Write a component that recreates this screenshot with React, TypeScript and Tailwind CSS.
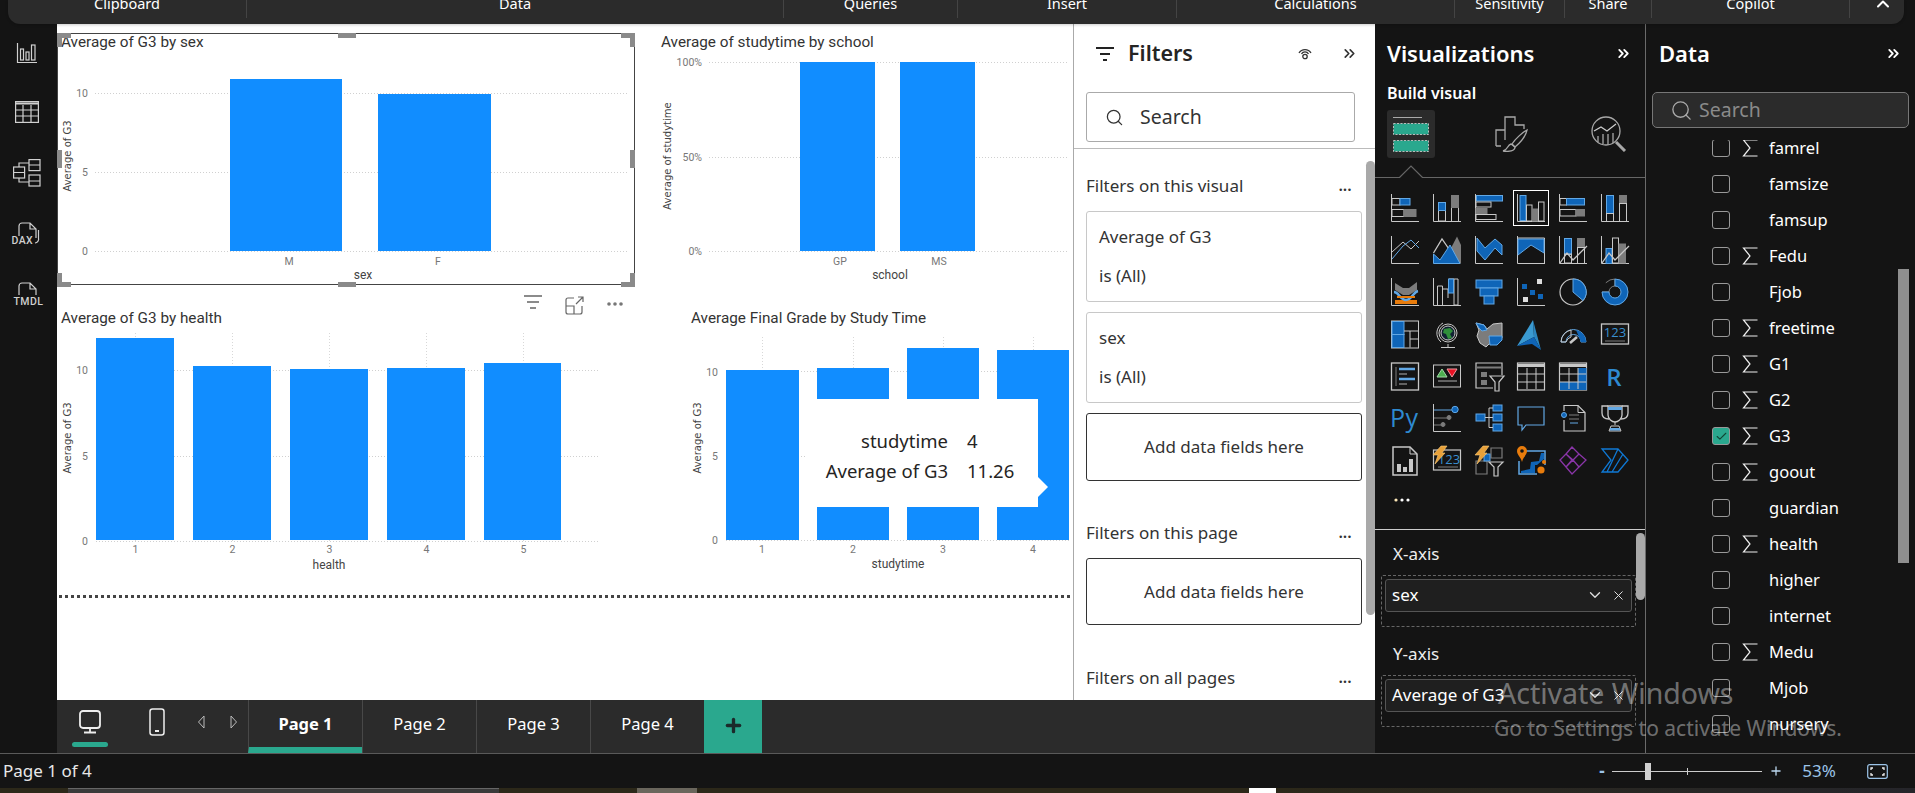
import React from "react";
import { ChevronsRight, Search, ChevronDown, X, ChevronUp, Plus, Check } from "lucide-react";

const G = "#c8c8c8", D = "#7c7c7c", B = "#0f65b8", L = "#62a8e5", O = "#e87c0c";
const BLUE = "#118dff";
const AX = <path d="M.5 0V27.5H28" stroke={G} />;

const vizIcons: React.ReactNode[] = [
  <>{AX}<rect x="1" y="4.5" width="8" height="6.5" stroke={G} /><rect x="9" y="4.5" width="10" height="6.5" fill={B} stroke={L} /><rect x="1" y="15.5" width="12" height="7" stroke={G} /><rect x="13" y="15.5" width="12" height="7" fill={D} stroke={D} /></>,
  <>{AX}<rect x="5.5" y="16" width="7" height="11" stroke={G} /><rect x="5.5" y="8.5" width="7" height="8" fill={B} stroke={L} /><rect x="18.5" y="13.5" width="7" height="14" stroke={G} /><rect x="18.5" y="1.5" width="7" height="12" fill={D} stroke={D} /></>,
  <>{AX}<rect x="1.5" y="1.5" width="26" height="5.5" fill={B} stroke={L} /><rect x="1" y="8" width="15" height="5" stroke={G} /><rect x="1" y="14.5" width="11" height="5" fill={D} stroke={D} /><rect x="1" y="20.5" width="20" height="5" stroke={G} /></>,
  <>{AX}<rect x="3" y="1.5" width="6" height="25" fill={B} stroke={L} /><rect x="9.5" y="11" width="5.5" height="16" stroke={G} /><rect x="15.5" y="15" width="5" height="12" fill={D} stroke={D} /><rect x="21.5" y="8" width="5.5" height="19" stroke={G} /></>,
  <>{AX}<rect x="1" y="4.5" width="6.5" height="6.5" stroke={G} /><rect x="7.5" y="4.5" width="18" height="6.5" fill={B} stroke={L} /><rect x="1" y="15.5" width="16" height="6.5" stroke={G} /><rect x="17" y="15.5" width="8.5" height="6.5" fill={D} stroke={D} /></>,
  <>{AX}<rect x="5.5" y="1.5" width="7" height="18" fill={B} stroke={L} /><rect x="5.5" y="19.5" width="7" height="8" stroke={G} /><rect x="18.5" y="1.5" width="7" height="8" fill={D} stroke={D} /><rect x="18.5" y="9.5" width="7" height="18" stroke={G} /></>,

  <>{AX}<path d="M1 16L12 6L20 13L28 5" stroke={G} /><path d="M1 23L12 10L20 4L28 12" stroke={L} /></>,
  <><path d="M17 14L24 .5L28 9V27.5H19Z" fill={D} /><path d="M.5 17L9 3L18 16" stroke={G} strokeWidth="1.3" /><path d="M.5 18L7 24L17 9L27 27.5H.5Z" fill={B} stroke={L} /></>,
  <>{AX}<path d="M2 2L10 12L20 3L27 9V19L20 12L10 24L2 15Z" fill={B} stroke={L} /></>,
  <>{AX}<path d="M.5 2H27.5V27.5" stroke={G} /><path d="M1 3H27V17L14 9L1 19Z" fill={B} stroke={L} /></>,
  <>{AX}<rect x="5.5" y="2.5" width="7" height="16" fill={B} stroke={L} /><rect x="5.5" y="18" width="7" height="9" stroke={G} /><rect x="18.5" y="2.5" width="7" height="9" fill={D} stroke={D} /><rect x="18.5" y="11.5" width="7" height="16" stroke={G} /><path d="M1 27L8 17L14 24L28 10" stroke={G} strokeWidth="1.3" /></>,
  <>{AX}<rect x="5" y="12.5" width="6" height="15" fill={B} stroke={L} /><rect x="11.5" y="2" width="6" height="25" stroke={G} /><rect x="18" y="8" width="6.5" height="19" fill={D} stroke={D} /><path d="M1 27L8 17L14 24L28 10" stroke={G} strokeWidth="1.3" /></>,

  <>{AX}<path d="M4 5L12 10H18L26 4V12L18 17H12L4 12Z" fill={D} /><path d="M4 22H26V26H4Z" fill={O} /><path d="M3 14C8 14 9 22 15 22S22 14 27 13" stroke={L} strokeWidth="2.5" /><path d="M6 19H24" stroke={O} strokeWidth="2" /></>,
  <>{AX}<path d="M4.5 27V8H9.5V27M9.5 11H15V20M16 1H21V27H25V1H21" stroke={G} /><rect x="15.5" y="1" width="5" height="14" fill={B} stroke={L} /></>,
  <><rect x="1" y="2" width="26" height="8" fill={B} stroke={L} /><rect x="5" y="10" width="18" height="8" fill={B} stroke={L} /><rect x="9" y="18" width="10" height="8" fill={B} stroke={L} /></>,
  <>{AX}<rect x="5" y="6" width="5" height="5" fill={B} /><rect x="13" y="12" width="5" height="5" fill={B} /><rect x="21" y="16" width="5" height="5" fill={B} /><rect x="20" y="1" width="5" height="5" fill="#ddd" /><rect x="6" y="19" width="5" height="5" fill="#ddd" /></>,
  <><circle cx="14" cy="14" r="13" stroke={G} strokeWidth="1.2" /><path d="M14 14V1A13 13 0 0 1 24 22.5Z" fill={B} stroke={L} /></>,
  <><path d="M4.8 4.8A13 13 0 0 1 14 1V8A6 6 0 0 0 8 14H1" stroke={D} strokeWidth="1" /><path d="M14 1A13 13 0 1 1 1 14H8A6 6 0 1 0 14 8Z" fill={B} stroke={L} /></>,

  <><rect x=".5" y="1" width="27" height="27" stroke={G} /><rect x="1" y="1.5" width="12" height="13" fill={B} stroke={L} /><rect x="1" y="14.5" width="12" height="13" fill={B} stroke={L} /><path d="M13 11H27M19 11V27.5M19 19H27" stroke={G} /></>,
  <><circle cx="15" cy="13" r="9" stroke={G} /><circle cx="15" cy="13" r="7" fill="#123" stroke={G} /><path d="M11 9L17 8L20 11L17 14L19 18L15 19L13 14L10 13Z" fill="#2f8f3a" /><path d="M10 3A11.5 11.5 0 0 0 8 22M15 24V27M8 27.5H22" stroke={G} /></>,
  <><path d="M1 3L9 5L12 9L18 4L27 3V18L22 24H14L11 27L5 23L2 16L4 10Z" fill={D} stroke={G} /><path d="M1 3L9 5L12 10L7 11L4 8Z" fill={B} stroke={L} /><path d="M14 16H27V20L22 25H15Z" fill={B} stroke={L} /></>,
  <><path d="M0 26L16 0L17 17Z" fill="#3a9ad1" /><path d="M16 0L24 30L17 17Z" fill="#2b86c0" /><path d="M0 26L17 17L24 30L15 24Z" fill="#0f65b8" /></>,
  <><path d="M2 22A12.5 12.5 0 0 1 27 22H22A7.5 7.5 0 0 0 7 22Z" stroke={L} fill="none" /><path d="M2 22A12.5 12.5 0 0 1 12 10V17A7.5 7.5 0 0 0 7 22Z" stroke={G} /><path d="M11 23L18 17" stroke={G} strokeWidth="2.5" /><path d="M17 10A12 12 0 0 1 27 22H22Z" fill={B} /></>,
  <><rect x=".5" y="4" width="27" height="20" stroke={G} strokeWidth="1.3" /><text x="14" y="17" textAnchor="middle" fontSize="13" fill="#3a8fd0" fontFamily="Open Sans, sans-serif">123</text><path d="M4 21H24" stroke={D} /></>,

  <><rect x=".5" y="1" width="27" height="27" stroke={G} strokeWidth="1.3" /><path d="M5 5V24" stroke={D} /><path d="M8 7H24M8 17H24" stroke={L} strokeWidth="2.5" /><path d="M8 12H16M8 22H16" stroke={D} strokeWidth="1.5" /></>,
  <><rect x=".5" y="3" width="27" height="22" stroke={G} /><path d="M4 15L9 7L14 15Z" fill="#4caf50" stroke="#9fd8a4" /><path d="M14 7H24L19 15Z" fill="#e81123" stroke="#f29aa2" /><path d="M5 19H24" stroke={D} strokeWidth="1.5" /></>,
  <><path d="M18 26H1V1H27V13" stroke={G} strokeWidth="1.2" /><path d="M1 5.5H27" stroke={D} strokeWidth="2" /><rect x="6" y="10" width="6" height="5" fill={D} /><rect x="6" y="18" width="6" height="5" fill={D} /><path d="M15 14H29L24 20V29H20V20Z" fill="#141414" stroke={G} strokeWidth="1.2" /></>,
  <><rect x=".5" y="1" width="27" height="27" stroke={G} strokeWidth="1.2" /><path d="M1 3.5H27" stroke={G} strokeWidth="3" /><path d="M1 12H27M1 20H27M10 6V27M19 6V27" stroke={G} /></>,
  <><rect x=".5" y="1" width="27" height="27" stroke={G} strokeWidth="1.2" /><path d="M1 3.5H27" stroke={G} strokeWidth="3" /><rect x="19" y="6" width="8.5" height="7" fill={B} /><rect x="19" y="13" width="8.5" height="7" fill={B} /><rect x="1" y="20" width="26.5" height="8" fill={B} /><path d="M1 12H27M1 20H27M10 6V27M19 6V27" stroke={G} /></>,
  <text x="13" y="24" textAnchor="middle" fontSize="24" fontWeight="600" fill="#2e8ad0" fontFamily="Open Sans, sans-serif">R</text>,

  <text x="13" y="23" textAnchor="middle" fontSize="25" fill="#2e8ad0" fontFamily="Open Sans, sans-serif" textLength="28">Py</text>,
  <>{AX}<path d="M1 6H19" stroke={L} /><path d="M1 14H16M1 21H11" stroke={D} /><circle cx="22" cy="5.5" r="3.2" fill={B} stroke={L} /><circle cx="16" cy="13.5" r="2" fill={D} stroke={D} /><circle cx="10" cy="20.5" r="2" fill={D} stroke={D} /></>,
  <><rect x="1" y="10" width="9" height="7" fill={B} stroke={L} /><rect x="18" y="1" width="9" height="6" fill={B} stroke={L} /><rect x="18" y="10" width="9" height="7" fill={B} stroke={L} /><rect x="18" y="20" width="9" height="7" fill={B} stroke={L} /><path d="M10 13.5H18M14 4V23.5M14 4H18M14 23.5H18" stroke={G} /></>,
  <path d="M1 3H27V21H9L5 26V21H1Z" stroke={L} strokeWidth="1.2" />,
  <><path d="M5 7V1.5H19L26 8.5V27H5V16" stroke={G} strokeWidth="1.2" /><path d="M19 1.5V8.5H26" stroke={G} /><circle cx="5" cy="11" r="2.5" fill={B} stroke={L} /><path d="M10 11H20M10 15H20" stroke={D} /><path d="M11 19H19" stroke={L} /></>,
  <><path d="M7 2H1V9C1 13 4 15 8 15M21 2H27V9C27 13 24 15 20 15" stroke={G} strokeWidth="1.3" /><path d="M7 2H21V11C21 15 17 18 14 18S7 15 7 11Z" stroke={G} strokeWidth="1.3" /><rect x="7" y="3" width="14" height="3" fill={L} /><path d="M14 18V21M10 22H18L20 27H8Z" stroke={G} /><rect x="9" y="24" width="10" height="2.5" fill={L} /></>,

  <><path d="M2 1H19L26 8V29H2Z" stroke={G} strokeWidth="1.5" /><path d="M19 1V8H26" stroke={G} /><rect x="6" y="18" width="4" height="8" fill={G} /><rect x="12" y="21" width="4" height="5" fill={G} /><rect x="18" y="13" width="4" height="13" fill={G} /></>,
  <><rect x=".5" y="4" width="27" height="20" stroke={G} strokeWidth="1.2" /><text x="16" y="18" textAnchor="middle" fontSize="13" fill="#3a8fd0" fontFamily="Open Sans, sans-serif">123</text><path d="M5 21H25" stroke={D} /><path d="M8 0H14L9 7H12L2 18L5 9H0Z" fill="#e8a13a" stroke="#f8c979" strokeWidth=".6" /></>,
  <><path d="M1 15H12V28H1ZM16 2H27V12H16Z" stroke={D} strokeWidth="1.2" /><rect x="9" y="8" width="6" height="7" fill={B} stroke={L} /><path d="M8 0H14L9 7H12L2 18L5 9H0Z" fill="#e8a13a" stroke="#f8c979" strokeWidth=".6" /><path d="M14 16H28L23 21V30H19V21Z" fill="#141414" stroke={G} strokeWidth="1.2" /></>,
  <><path d="M7 5H28V19M20 28H2V15" stroke={L} strokeWidth="1.5" fill="none" /><path d="M4 25L13 23L14 16L22 15L24 7H27V13L20 19H18V27H4Z" fill={B} /><path d="M5 0A5 5 0 0 1 10 5C10 9 6 11 5 16C4 11 0 9 0 5A5 5 0 0 1 5 0Z" fill={O} /><circle cx="5" cy="5" r="1.8" fill="#141414" /><circle cx="24" cy="24" r="3.6" fill={O} /><circle cx="27" cy="16" r="2" fill={O} /></>,
  <><path d="M13 1L20 8L14 14L7 8Z M20 8L27 14L20 21L14 14Z M7 8L13 14L7 21L1 14Z M14 14L20 21L13 28L7 21Z" stroke="#8a35a8" strokeWidth="1.3" /></>,
  <><path d="M1 3H17L27 14L17 26H1L10 14Z M17 3L6 26 M22 8L11 26" stroke="#0f78d4" strokeWidth="1.3" fill="none" /></>,

  <g fill="#fff"><circle cx="5" cy="12" r="1.6" fill="#ffe9b8" /><circle cx="11" cy="12" r="1.6" /><circle cx="17" cy="12" r="1.6" /></g>,
];

function Plot({ x, y, w, h, children }: { x: number; y: number; w: number; h: number; children: React.ReactNode }) {
  return (
    <svg width={w} height={h} viewBox={`${x} ${y} ${w} ${h}`} className="block" fontFamily="Roboto, sans-serif">
      {children}
    </svg>
  );
}

const Title = ({ x, y, t }: { x: number; y: number; t: string }) => (
  <text x={x} y={y + 5} fontSize="15.3" fill="#333">{t}</text>
);
const YTitle = ({ x, y, t }: { x: number; y: number; t: string }) => (
  <text transform={`translate(${x + 5.5} ${y}) rotate(-90)`} textAnchor="middle" fontSize="10" fill="#444" fontFamily="DejaVu Sans, sans-serif">{t}</text>
);
const Tick = ({ x, y, t, a = "end" }: { x: number; y: number; t: string; a?: "end" | "middle" }) => (
  <text x={x} y={y + 3.5} textAnchor={a} fontSize="10.5" fill="#777">{t}</text>
);
const XTitle = ({ x, y, t }: { x: number; y: number; t: string }) => (
  <text x={x} y={y + 4} textAnchor="middle" fontSize="12" fill="#444">{t}</text>
);
const Grid = ({ x1, x2, y }: { x1: number; x2: number; y: number }) => (
  <line x1={x1} x2={x2} y1={y + 0.5} y2={y + 0.5} stroke="#d0d0d0" strokeDasharray="1 2" />
);
const VGrid = ({ x, y1, y2 }: { x: number; y1: number; y2: number }) => (
  <line x1={x + 0.5} x2={x + 0.5} y1={y1} y2={y2} stroke="#d8d8d8" strokeDasharray="1 2" />
);
const Bar = ({ x1, x2, top, bot }: { x1: number; x2: number; top: number; bot: number }) => (
  <rect x={x1} y={top} width={x2 - x1} height={bot - top} fill={BLUE} />
);

function Handle({ className }: { className: string }) {
  return <div className={`absolute bg-[#8a8a8a] ${className}`} />;
}

function Visual1() {
  return (
    <div className="relative h-[252px] w-[578px] border border-[#444]">
      <div className="-m-px">
        <Plot x={57} y={33} w={578} h={252}>
          <Title x={61} y={42} t="Average of G3 by sex" />
          <YTitle x={65} y={156} t="Average of G3" />
          <Grid x1={95} x2={629} y={93} />
          <Grid x1={95} x2={629} y={172} />
          <Grid x1={95} x2={629} y={251} />
          <Tick x={88} y={93} t="10" />
          <Tick x={88} y={172} t="5" />
          <Tick x={88} y={251} t="0" />
          <Bar x1={230} x2={342} top={79} bot={251} />
          <Bar x1={378} x2={491} top={94} bot={251} />
          <Tick x={289} y={261} t="M" a="middle" />
          <Tick x={438} y={261} t="F" a="middle" />
          <XTitle x={363} y={275} t="sex" />
        </Plot>
      </div>
      <Handle className="-left-px -top-px h-[5px] w-[14px]" />
      <Handle className="-left-px -top-px h-[14px] w-[5px]" />
      <Handle className="-right-px -top-px h-[5px] w-[14px]" />
      <Handle className="-right-px -top-px h-[14px] w-[5px]" />
      <Handle className="-bottom-[3px] -left-px h-[5px] w-[14px]" />
      <Handle className="-bottom-[3px] -left-px h-[14px] w-[5px]" />
      <Handle className="-bottom-[3px] -right-px h-[5px] w-[14px]" />
      <Handle className="-bottom-[3px] -right-px h-[14px] w-[5px]" />
      <Handle className="left-[280px] -top-px h-[5px] w-[18px]" />
      <Handle className="-bottom-[3px] left-[280px] h-[5px] w-[18px]" />
      <Handle className="-left-px top-[116px] h-[18px] w-[5px]" />
      <Handle className="-right-px top-[116px] h-[18px] w-[5px]" />
    </div>
  );
}

function Visual2() {
  return (
    <Plot x={657} y={33} w={416} h={252}>
      <Title x={661} y={42} t="Average of studytime by school" />
      <YTitle x={665} y={156} t="Average of studytime" />
      <Grid x1={709} x2={1068} y={62} />
      <Grid x1={709} x2={1068} y={157} />
      <Grid x1={709} x2={1068} y={251} />
      <Tick x={702} y={62} t="100%" />
      <Tick x={702} y={157} t="50%" />
      <Tick x={702} y={251} t="0%" />
      <Bar x1={800} x2={875} top={62} bot={251} />
      <Bar x1={900} x2={975} top={62} bot={251} />
      <Tick x={840} y={261} t="GP" a="middle" />
      <Tick x={939} y={261} t="MS" a="middle" />
      <XTitle x={890} y={275} t="school" />
    </Plot>
  );
}

function Visual3() {
  const bars: [number, number, number][] = [[96, 174, 338], [193, 271, 366], [290, 368, 369], [387, 465, 368], [484, 561, 363]];
  const xs = [135, 232, 329, 426, 523];
  return (
    <Plot x={57} y={285} w={600} h={308}>
      <g stroke="#666" fill="none">
        <path d="M524 296H542M527 302H539M530 308H536" strokeWidth="1.5" />
        <path d="M574 298H568A2 2 0 0 0 566 300V312A2 2 0 0 0 568 314H580A2 2 0 0 0 582 312V306M566 306H574V314M576 304L583 297M578 297H583V302" strokeWidth="1.2" />
      </g>
      <g fill="#777"><circle cx="609" cy="304" r="1.8" /><circle cx="615" cy="304" r="1.8" /><circle cx="621" cy="304" r="1.8" /></g>
      <Title x={61} y={318} t="Average of G3 by health" />
      <YTitle x={65} y={438} t="Average of G3" />
      {xs.map((x) => <VGrid key={x} x={x} y1={333} y2={541} />)}
      <Grid x1={96} x2={600} y={370} />
      <Grid x1={96} x2={600} y={456} />
      <Grid x1={96} x2={600} y={541} />
      <Tick x={88} y={370} t="10" />
      <Tick x={88} y={456} t="5" />
      <Tick x={88} y={541} t="0" />
      {bars.map(([a, b, t]) => <Bar key={a} x1={a} x2={b} top={t} bot={540} />)}
      {xs.map((x, i) => <Tick key={x} x={x + 0.5} y={549} t={String(i + 1)} a="middle" />)}
      <XTitle x={329} y={565} t="health" />
    </Plot>
  );
}

function Visual4() {
  const bars: [number, number, number][] = [[726, 799, 370], [817, 889, 368], [907, 979, 348], [997, 1069, 350]];
  const xs = [762, 853, 943, 1033];
  return (
    <div className="relative">
      <Plot x={657} y={285} w={416} h={308}>
        <Title x={691} y={318} t="Average Final Grade by Study Time" />
        <YTitle x={695} y={438} t="Average of G3" />
        {xs.map((x) => <VGrid key={x} x={x} y1={337} y2={541} />)}
        <Grid x1={726} x2={1070} y={371} />
        <Grid x1={726} x2={1070} y={456} />
        <Grid x1={726} x2={1070} y={540} />
        <Tick x={718} y={372} t="10" />
        <Tick x={718} y={456} t="5" />
        <Tick x={718} y={540} t="0" />
        {bars.map(([a, b, t]) => <Bar key={a} x1={a} x2={b} top={t} bot={540} />)}
        {xs.map((x, i) => <Tick key={x} x={x} y={549} t={String(i + 1)} a="middle" />)}
        <XTitle x={898} y={564} t="studytime" />
      </Plot>
      <div className="absolute left-[149px] top-[114px] h-[108px] w-[232px] bg-white pt-[27px] text-[18.5px] leading-[30px] text-[#252423]">
        <div className="grid grid-cols-[142px_auto] justify-start gap-x-[19px]">
          <span className="text-right">studytime</span><span>4</span>
          <span className="text-right">Average of G3</span><span>11.26</span>
        </div>
      </div>
      <div className="absolute left-[381px] top-[192px] h-[20px] w-[10px] bg-white [clip-path:polygon(0_0,100%_50%,0_100%)]" />
    </div>
  );
}

function Dots() {
  return <span className="mr-[10px] text-[14px] font-bold leading-[14px] tracking-[0.5px] text-[#333]">...</span>;
}

function SectionHead({ t, className }: { t: string; className: string }) {
  return (
    <div className={`flex h-6 w-[276px] items-center justify-between text-[#333] ${className}`}>
      <span>{t}</span>
      <Dots />
    </div>
  );
}

function FilterCard({ a, className = "" }: { a: string; className?: string }) {
  return (
    <div className={`flex h-[91px] w-[276px] flex-col justify-center rounded-[3px] border border-[#c8c8c8] pb-px pl-3 leading-[39px] text-[#333] ${className}`}>
      <div>{a}</div>
      <div>is (All)</div>
    </div>
  );
}

function AddCard({ h, className }: { h: string; className: string }) {
  return (
    <div className={`flex w-[276px] items-center justify-center rounded-[3px] border border-[#333] text-[#333] ${h} ${className}`}>
      Add data fields here
    </div>
  );
}

function FiltersPane() {
  return (
    <div className="relative h-full w-[302px] shrink-0 overflow-hidden border-l border-[#aaa] bg-white text-[17px]">
      <div className="flex h-[58px] items-center pl-[21px] pt-px">
        <svg width="20" height="16" viewBox="0 0 20 16" stroke="#222" strokeWidth="2" fill="none"><path d="M1 2H19M5 8H15M8 14H12" /></svg>
        <span className="ml-[13px] w-[63px] text-[21.5px] font-semibold text-[#252423]">Filters</span>
        <svg className="ml-[107px]" width="14" height="14" viewBox="0 0 14 14" fill="none" stroke="#333" strokeWidth="1.3"><path d="M1 6A7 7 0 0 1 13 6M3.5 7A4 4 0 0 1 10.5 7" /><circle cx="7" cy="9.5" r="2.2" /></svg>
        <ChevronsRight className="ml-[29px]" size={17} strokeWidth={2.4} color="#333" />
      </div>
      <div className="ml-3 mt-[10px] flex h-[50px] w-[269px] items-center rounded-[3px] border border-[#aaa] pl-[18px] text-[19.5px] text-[#333]">
        <Search size={19} strokeWidth={1.6} />
        <span className="ml-[16px]">Search</span>
      </div>
      <div className="mt-[6px] border-b border-[#bbb]" />
      <div className="pl-3">
        <SectionHead t="Filters on this visual" className="mt-[25px]" />
        <FilterCard a="Average of G3" className="mt-[13px]" />
        <FilterCard a="sex" className="mt-[10px]" />
        <AddCard h="h-[68px]" className="mt-[10px]" />
        <SectionHead t="Filters on this page" className="mt-[40px]" />
        <AddCard h="h-[67px]" className="mt-[13px]" />
        <SectionHead t="Filters on all pages" className="mt-[41px]" />
      </div>
      <div className="absolute right-0 top-[137px] h-[454px] w-[9px] rounded-full bg-[#a9a9a9]" />
    </div>
  );
}

function Well({ label, value, className }: { label: string; value: string; className: string }) {
  return (
    <div className={className}>
      <div className="ml-[18px] flex h-6 items-center text-[#eee]">{label}</div>
      <div className="ml-[6px] mt-[9px] h-[52px] w-[255px] rounded-[2px] border border-dashed border-[#666] p-[3px]">
        <div className="flex h-[33px] items-center rounded-[3px] border border-[#555] bg-[#1f1f1f] pb-px pl-[6px] text-white">
          <span className="flex-1 whitespace-nowrap">{value}</span>
          <ChevronDown size={18} strokeWidth={1.8} color="#ddd" />
          <X className="ml-[7px] mr-[5px]" size={15} strokeWidth={1.6} color="#ddd" />
        </div>
      </div>
    </div>
  );
}

function VizPane() {
  return (
    <div className="relative h-[729px] w-[271px] shrink-0 overflow-hidden border-r border-[#6b6b6b] bg-[#141414] text-[17px] text-white">
      <div className="flex h-[58px] items-center justify-between pl-3 pr-[13px] pt-px">
        <span className="text-[22px] font-semibold">Visualizations</span>
        <ChevronsRight size={17} strokeWidth={2.6} />
      </div>
      <div className="flex h-[22px] items-center pl-3 text-[16px] font-semibold">Build visual</div>
      <div className="mt-[6px] flex h-12 items-center pl-3">
        <div className="h-12 w-12 rounded-[3px] bg-[#2b2b2b]">
          <svg width="48" height="48" viewBox="0 0 48 48" fill="none">
            <path d="M6 7.5H35" stroke="#aaa" />
            <rect x="6.5" y="13.5" width="35" height="11" fill="#2aa88e" stroke="#bbb" strokeDasharray="2 1.5" />
            <rect x="6.5" y="30.5" width="35" height="11" fill="#2aa88e" stroke="#bbb" strokeDasharray="2 1.5" />
          </svg>
        </div>
        <svg className="ml-[60px]" width="34" height="36" viewBox="0 0 34 36" fill="none" stroke="#a8a8a8" strokeWidth="1.3">
          <path d="M1 30V14H10V1H20V9H29V13M10 14V24M6 30H1" />
          <path d="M32 14C28 16 20 23 17 28L20 31C26 26 31 19 32 14Z" />
          <path d="M16 28C12 29 13 34 8 35C14 36 20 35 20 31Z" />
        </svg>
        <svg className="ml-[62px]" width="36" height="36" viewBox="0 0 36 36" fill="none" stroke="#a8a8a8" strokeWidth="1.3">
          <circle cx="15" cy="15" r="14" />
          <path d="M3 15L10 11L16 15L25 8" stroke="#ccc" />
          <path d="M7 20V26M12 18V28M17 18V29M22 17V27" />
          <path d="M25 26L34 35" strokeWidth="3" />
        </svg>
      </div>
      <svg className="mt-[7px] block" width="270" height="13" viewBox="0 0 270 13" fill="none" stroke="#666" strokeWidth="1.2"><path d="M0 12.5H24.5L36 1L47.5 12.5H270" /></svg>
      <div className="ml-4 mt-4 grid h-[335px] grid-cols-[repeat(6,28px)] content-start gap-x-[14px] gap-y-[14px]">
        {vizIcons.map((ic, i) => (
          <div key={i} className={i === 3 ? "relative" : ""}>
            <svg width="28" height="28" viewBox="0 0 28 28" fill="none" overflow="visible" className="block">{ic}</svg>
            {i === 3 && <div className="absolute -inset-[4px] border border-white" />}
          </div>
        ))}
      </div>
      <div className="border-t border-[#ccc]" />
      <Well label="X-axis" value="sex" className="mt-[12px]" />
      <Well label="Y-axis" value="Average of G3" className="mt-[15px]" />
      <div className="absolute right-0 top-[509px] h-[67px] w-[9px] rounded-full bg-[#a9a9a9]" />
    </div>
  );
}

const fields: [string, boolean][] = [
  ["famrel", true], ["famsize", false], ["famsup", false], ["Fedu", true], ["Fjob", false], ["freetime", true], ["G1", true], ["G2", true], ["G3", true],
  ["goout", true], ["guardian", false], ["health", true], ["higher", false], ["internet", false], ["Medu", true], ["Mjob", false], ["nursery", false],
];

function DataPane() {
  return (
    <div className="relative flex h-[729px] flex-1 flex-col overflow-hidden bg-[#141414] text-[16.5px] text-white">
      <div className="flex h-[58px] shrink-0 items-center justify-between px-[13px] pt-px">
        <span className="text-[22px] font-semibold">Data</span>
        <ChevronsRight size={17} strokeWidth={2.6} />
      </div>
      <div className="ml-[6px] mt-[10px] flex h-9 w-[257px] shrink-0 items-center rounded-[5px] border border-[#777] bg-[#2b2b2b] pl-[17px] text-[19.5px] text-[#8a8a8a]">
        <Search size={23} strokeWidth={1.4} color="#aaa" />
        <span className="ml-[6px]">Search</span>
      </div>
      <div className="mt-3 flex-1 overflow-hidden">
        <div className="-mt-[10px]">
          {fields.map(([n, s]) => (
            <div key={n} className="flex h-9 items-center pl-[66px]">
              {n === "G3" ? (
                <div className="flex h-[18px] w-[18px] items-center justify-center rounded-[3px] border border-[#999] bg-[#2aa88e]">
                  <Check size={13} strokeWidth={2} color="#143" />
                </div>
              ) : (
                <div className="h-[18px] w-[18px] rounded-[3px] border border-[#999]" />
              )}
              <div className="flex w-[39px] justify-center">
                {s && (
                  <svg width="16" height="18" viewBox="0 0 16 18" fill="none" stroke="#eee" strokeWidth="1.2"><path d="M15.5 1H1.5L8 9L1.5 17H15.5" /></svg>
                )}
              </div>
              <span>{n}</span>
            </div>
          ))}
        </div>
      </div>
      <div className="absolute left-[252px] top-[245px] h-[294px] w-[11px] bg-[#8f8f8f]" />
    </div>
  );
}

function SideIcon({ w, h, mt, children }: { w: number; h: number; mt: string; children: React.ReactNode }) {
  return (
    <svg className={`block ${mt}`} width={w} height={h} viewBox={`0 0 ${w} ${h}`} overflow="visible" fill="none" stroke="#d0d0d0" strokeWidth="1.2" fontFamily="Roboto, sans-serif">
      {children}
    </svg>
  );
}

function Sidebar() {
  return (
    <div className="flex w-[57px] shrink-0 flex-col items-center bg-[#141414] pr-[3px]">
      <SideIcon w={20} h={20} mt="mt-[19px]">
        <path d="M.5 0V19.5H20" /><rect x="3.5" y="6" width="3" height="11" /><rect x="9" y="9" width="3" height="8" /><rect x="14.5" y="2" width="3.5" height="15" />
      </SideIcon>
      <SideIcon w={24} h={22} mt="mt-[38px]">
        <rect x=".6" y=".6" width="22.8" height="20.8" /><path d="M1 2.5H23" strokeWidth="2" /><path d="M1 9H23M1 15H23M8 4V21M16 4V21" />
      </SideIcon>
      <SideIcon w={28} h={28} mt="mt-[36px]">
        <rect x="16" y=".6" width="11" height="11" /><rect x="16" y="16" width="11" height="11" /><rect x=".6" y="8" width="11" height="11" /><path d="M16 6H27M16 22H27M1 13.5H11M6 8V4H16M6 19V23H16" />
      </SideIcon>
      <SideIcon w={27} h={23} mt="mt-[35px]">
        <path d="M5 14V4A3 3 0 0 1 8 1H16L22 7V16M16 1V7H22M24.500 8V16A4 4 0 0 1 21 21" />
        <text x="-2.5" y="22" fontSize="10.5" fontWeight="500" fill="#d0d0d0" stroke="none" letterSpacing="0.4">DAX</text>
      </SideIcon>
      <SideIcon w={29} h={23} mt="mt-[37px]">
        <path d="M6 13V4A3 3 0 0 1 9 1H17L23 7V13M17 1V7H23" />
        <text x="0.5" y="23" fontSize="10.5" fontWeight="500" fill="#d0d0d0" stroke="none" letterSpacing="0.4">TMDL</text>
      </SideIcon>
    </div>
  );
}

const ribbon: [string, number][] = [["Clipboard", 239], ["Data", 537], ["Queries", 174], ["Insert", 219], ["Calculations", 278], ["Sensitivity", 110], ["Share", 87], ["Copilot", 198]];

function Ribbon() {
  return (
    <div className="bg-[#141414]">
      <div className="relative z-10 ml-2 mr-[11px] flex h-6 overflow-hidden rounded-b-xl bg-[#2b2b2b] text-[14.5px] text-white shadow-[0_1px_3px_rgba(0,0,0,0.2)]">
        {ribbon.map(([t, w]) => (
          <div key={t} className="flex h-[18px] shrink-0 justify-center border-r border-[#444]" style={{ width: w }}>
            <span className="-mt-[9px] leading-[24px]">{t}</span>
          </div>
        ))}
        <div className="flex flex-1 justify-end pr-[11px]">
          <ChevronUp className="-mt-[6px]" size={20} strokeWidth={2.4} />
        </div>
      </div>
    </div>
  );
}

function TabBar() {
  const tabs = ["Page 1", "Page 2", "Page 3", "Page 4"];
  return (
    <div className="flex h-[53px] items-stretch bg-[#2b2b2b] text-[16.5px] text-white">
      <div className="flex w-[191px] shrink-0 items-start">
        <div className="ml-[15px] flex w-9 flex-col items-center">
          <svg className="mt-[10px]" width="24" height="24" viewBox="0 0 24 24" fill="none" stroke="#eee" strokeWidth="1.8"><rect x="2" y="1" width="20" height="17" rx="3" /><path d="M12 18V22M6 22.5H18" /></svg>
          <div className="mt-[8px] h-[5px] w-9 rounded-full bg-[#2aa88e]" />
        </div>
        <svg className="ml-[41px] mt-2" width="16" height="28" viewBox="0 0 16 28" fill="none" stroke="#eee" strokeWidth="1.5"><rect x="1" y="1" width="14" height="26" rx="2.5" /><path d="M6 23H10" strokeWidth="2" /></svg>
        <svg className="ml-[32px] mt-[15px]" width="8" height="14" viewBox="0 0 8 14" fill="none" stroke="#bbb"><path d="M7 1L1.5 7L7 13Z" /></svg>
        <svg className="ml-[25px] mt-[15px]" width="8" height="14" viewBox="0 0 8 14" fill="none" stroke="#bbb"><path d="M1 1L6.5 7L1 13Z" /></svg>
      </div>
      {tabs.map((t, i) => (
        <div key={t} className={`flex w-[114px] shrink-0 items-center justify-center border-l border-[#484848] ${i === 0 ? "border-b-[6px] border-b-[#2aa88e] pt-[1px] font-bold" : "pb-[5px]"}`}>
          {t}
        </div>
      ))}
      <div className="flex w-[58px] shrink-0 items-center justify-center bg-[#2aa88e] pb-[3px]">
        <Plus size={21} strokeWidth={3.8} color="#1b2a2a" />
      </div>
    </div>
  );
}

function StatusBar() {
  return (
    <div className="flex h-[35px] items-center border-t border-[#5a5a5a] bg-[#141414] text-[17px] text-[#e8e8e8]">
      <span className="ml-[3px] flex-1">Page 1 of 4</span>
      <span className="w-2 text-center font-bold text-[#9cc4e8]">-</span>
      <div className="relative ml-[6px] h-px w-[150px] bg-[#ccc]">
        <div className="absolute -top-[8px] left-[33px] h-[17px] w-[6px] bg-[#d0d0d0]" />
        <div className="absolute -top-[3px] left-[75px] h-[7px] w-px bg-[#ccc]" />
      </div>
      <Plus className="ml-[7px]" size={14} strokeWidth={2.2} color="#bcd8f0" />
      <span className="ml-[19px] w-[34px] text-center text-[#9cc4e8]">53%</span>
      <svg className="ml-[31px] mr-[27px]" width="21" height="15" viewBox="0 0 21 15" fill="none"><rect x=".7" y=".7" width="19.6" height="13.6" rx="2" stroke="#9cc4e8" strokeWidth="1.2" /><path d="M6 4H4V6M15 4H17V6M6 11H4V9M15 11H17V9" stroke="#eee" strokeWidth="1.3" /></svg>
    </div>
  );
}

function Wallpaper() {
  return (
    <div className="flex h-[5px] bg-[#2c2819]">
      <div className="ml-[68px] w-[431px] border-t border-[#666] bg-[#3a3a3a]" />
      <div className="ml-[138px] w-[60px] bg-[#6a665c]" />
      <div className="ml-[552px] w-[27px] bg-white" />
      <div className="flex-1 bg-gradient-to-r from-[#2c2819] to-[#25252a]" />
    </div>
  );
}

export default function App() {
  return (
    <div className="relative h-[793px] w-[1915px] overflow-hidden bg-[#141414] [font-family:'Noto_Sans',sans-serif]">
      <Ribbon />
      <div className="flex h-[729px]">
        <Sidebar />
        <div className="flex w-[1318px] shrink-0 flex-col">
          <div className="flex h-[676px]">
            <div className="flex-1 bg-white pt-[9px]">
              <div className="grid grid-cols-[600px_416px] grid-rows-[252px_308px]">
                <Visual1 />
                <Visual2 />
                <Visual3 />
                <Visual4 />
              </div>
              <div className="ml-[2px] mr-[3px] mt-[2px] border-t-[3px] border-dotted border-[#444]" />
            </div>
            <FiltersPane />
          </div>
          <TabBar />
        </div>
        <VizPane />
        <DataPane />
      </div>
      <StatusBar />
      <Wallpaper />
      <div className="pointer-events-none absolute left-[1498px] top-[673px] whitespace-nowrap text-[28.5px] leading-[40px] text-white/40">Activate Windows</div>
      <div className="pointer-events-none absolute left-[1494px] top-[713px] whitespace-nowrap text-[21px] leading-[30px] text-white/40">Go to Settings to activate Windows.</div>
    </div>
  );
}
